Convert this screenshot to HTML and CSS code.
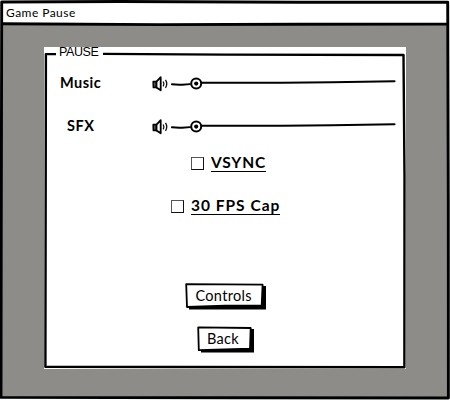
FILE: index.html
```html
<!DOCTYPE html>
<html lang="en">
<head>
<meta charset="utf-8">
<title>Game Pause</title>
<link rel="stylesheet" href="styles.css">
</head>
<body>
<div class="window">
  <header class="titlebar"><span class="title">Game Pause</span></header>
  <main class="stage">
    <section class="panel">
      <svg class="panel-frame" viewBox="0 0 362 322" aria-hidden="true">
        <path d="M12 7.1H1.9L1.4 319.8L130 320L360.4 320.2L360.5 130L359.5 8L180 7.6L59 6.9"/>
      </svg>
      <span class="legend">PAUSE</span>
      <div class="row slider-row">
        <span class="label music">Music</span>
        <svg class="slider" viewBox="0 0 246 20" aria-hidden="true">
          <use href="#slider-art"/>
        </svg>
      </div>
      <div class="row slider-row">
        <span class="label sfx">SFX</span>
        <svg class="slider" viewBox="0 0 246 20" aria-hidden="true">
          <use href="#slider-art"/>
        </svg>
      </div>
      <div class="row check vsync-row"><span class="box"></span><span class="link vsync">VSYNC</span></div>
      <div class="row check fps-row"><span class="box"></span><span class="link fps">30 FPS Cap</span></div>
      <div class="buttons">
        <div class="button controls"><svg viewBox="0 0 82 28" aria-hidden="true"><path class="shade" d="M4 23H77V3H81V26.5H4Z"/><path class="face" d="M1.2 1.2L77.6 1.7L76.7 22.4L40 22.6L2 24Z"/></svg><span>Controls</span></div>
        <div class="button back"><svg viewBox="0 0 58 28" aria-hidden="true"><path class="shade" d="M4 23H53V3H57V26.5H4Z"/><path class="face" d="M1.2 1.3L53.7 2L53 22.7L1.8 24.2Z"/></svg><span>Back</span></div>
      </div>
    </section>
  </main>
  <svg class="window-frame" viewBox="0 0 450 400" aria-hidden="true">
    <path d="M1.7 2L120 1.5L300 2.2L447.7 2.3L448.3 200L448.4 398L230 397.8L1 397.4L1.2 250Z"/>
    <path d="M2 23.8L160 24.6L300 24.2L447 24.1"/>
  </svg>
</div>
<svg class="defs" aria-hidden="true">
  <defs>
    <g id="slider-art">
      <path class="thin shaded" d="M1.3 6.7H4.5V12.4H1.5Z"/>
      <path class="thin" d="M4.5 6.7L8.7 2.1V15.3L4.5 12.4Z"/>
      <path class="wave" d="M11.2 6.5Q12.6 9 11.2 11.3M13.5 4.8Q16 8.7 13.5 12.8"/>
      <path class="track" d="M19.9 9.3Q25 9.9 30 9.7L38 9.1M49.5 7.8L130 7.8L180 7.3L242.6 6.3"/>
      <circle class="thumb" cx="44.2" cy="8.6" r="5"/>
      <circle cx="44.2" cy="8.6" r="2.1"/>
    </g>
  </defs>
</svg>
</body>
</html>
```
FILE: styles.css
```css
* { box-sizing: border-box; }
body { margin: 0; background: #fff; color: #000; font-family: Lato, "Liberation Sans", sans-serif; }
.window { position: relative; width: 450px; height: 400px; display: flex; flex-direction: column; padding: 2px 1px 2px 2px; }
.titlebar { height: 22px; padding: 3px 0 0 4px; }
.title { display: block; font-size: 12px; line-height: 16px; letter-spacing: .45px; white-space: nowrap; }
.stage { flex: 1; background: #8d8c89; padding: 23px 0 0 42px; }
.panel { position: relative; width: 362px; height: 322px; background: #fff; padding-top: 15px; }
.panel-frame, .window-frame { position: absolute; inset: 0; width: 100%; height: 100%; pointer-events: none; }
.panel-frame path, .window-frame path { fill: none; stroke: #000; stroke-width: 2.4; stroke-linejoin: round; }
.window-frame path { stroke-width: 2.9; }
.legend { position: absolute; left: 15px; top: -3px; font: 12.5px/16px "Liberation Sans", sans-serif; letter-spacing: -.4px; }
.row { display: flex; align-items: center; height: 43px; }
.label { width: 92px; padding-bottom: 2px; font-weight: 700; font-size: 14.5px; letter-spacing: .5px; }
.slider-row { padding-left: 16px; }
.sfx { padding-left: 7px; }
.slider { width: 246px; height: 20px; overflow: visible; position: relative; top: 1px; }
.defs { position: absolute; width: 0; height: 0; }
.thin { fill: #fff; stroke: #000; stroke-width: 1.8; stroke-linejoin: round; }
.shaded { fill: #777; }
.wave { fill: none; stroke: #111; stroke-width: 1.3; }
.track { fill: none; stroke: #000; stroke-width: 1.9; stroke-linecap: round; }
.thumb { fill: #fff; stroke: #000; stroke-width: 2; }
.check { gap: 7px; }
.vsync-row { height: 30px; padding-left: 147px; }
.fps-row { height: 56px; padding-left: 127px; }
.box { width: 13px; height: 13px; border: 1px solid #111; border-top-color: #555; border-left-color: #555; }
.link { font-weight: 700; font-size: 15.5px; line-height: 17px; height: 18px; border-bottom: 1px solid #000; white-space: nowrap; }
.vsync { letter-spacing: .8px; }
.fps { letter-spacing: 1px; }
.buttons { display: flex; flex-direction: column; gap: 15px; padding: 49px 0 0 141px; }
.button { position: relative; height: 28px; font-size: 14.5px; line-height: 25px; letter-spacing: .3px; }
.button svg { position: absolute; left: 0; top: 0; width: 100%; height: 100%; }
.button span { position: relative; display: block; }
.controls { width: 82px; padding-left: 10.5px; }
.back { width: 58px; margin-left: 12px; padding-left: 10px; }
.shade { fill: #000; }
.face { fill: #fff; stroke: #000; stroke-width: 1.8; stroke-linejoin: round; }
```
